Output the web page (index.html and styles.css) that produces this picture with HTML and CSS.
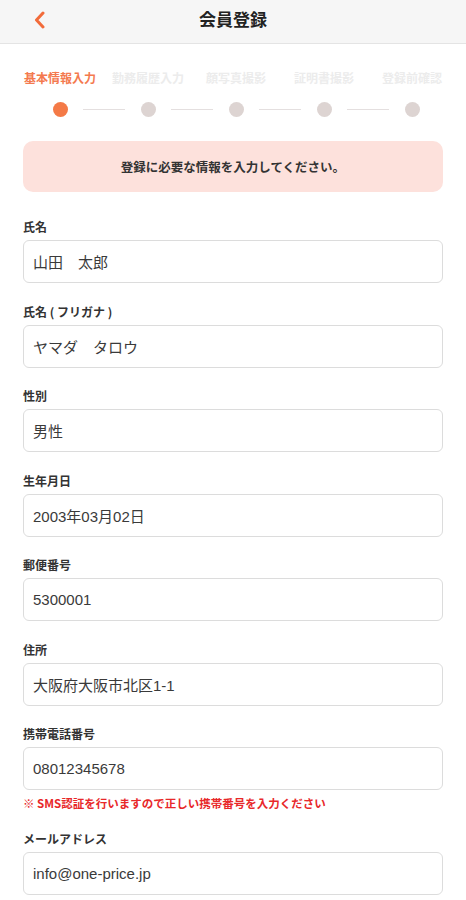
FILE: index.html
```html
<!DOCTYPE html>
<html lang="ja">
<head>
    <meta charset="UTF-8">
    <meta name="viewport" content="width=device-width, initial-scale=1.0">
    <title>会員登録</title>
    <link rel="stylesheet" href="styles.css">
</head>
<body>
    <header class="top-bar">
        <a class="back" href="#">
            <svg width="14" height="18" viewBox="0 0 14 18"><path d="M10 2 L3.5 9 L10 16" fill="none" stroke="#f26b3a" stroke-width="3" stroke-linecap="round" stroke-linejoin="round"/></svg>
        </a>
        <h1>会員登録</h1>
    </header>

    <div class="steps">
        <div class="step active"><span class="step-label">基本情報入力</span><span class="dot"></span></div>
        <div class="step"><span class="step-label">勤務履歴入力</span><span class="dot"></span></div>
        <div class="step"><span class="step-label">顔写真撮影</span><span class="dot"></span></div>
        <div class="step"><span class="step-label">証明書撮影</span><span class="dot"></span></div>
        <div class="step last"><span class="step-label">登録前確認</span><span class="dot"></span></div>
    </div>

    <div class="container">
        <div class="notice">登録に必要な情報を入力してください。</div>

        <div class="field">
            <label>氏名</label>
            <input type="text" value="山田　太郎">
        </div>
        <div class="field">
            <label>氏名 ( フリガナ )</label>
            <input type="text" value="ヤマダ　タロウ">
        </div>
        <div class="field">
            <label>性別</label>
            <input type="text" value="男性">
        </div>
        <div class="field">
            <label>生年月日</label>
            <input type="text" value="2003年03月02日">
        </div>
        <div class="field">
            <label>郵便番号</label>
            <input type="text" value="5300001">
        </div>
        <div class="field">
            <label>住所</label>
            <input type="text" value="大阪府大阪市北区1-1">
        </div>
        <div class="field">
            <label>携帯電話番号</label>
            <input type="text" value="08012345678">
            <p class="note">※ SMS認証を行いますので正しい携帯番号を入力ください</p>
        </div>
        <div class="field">
            <label>メールアドレス</label>
            <input type="text" value="info@one-price.jp">
        </div>
    </div>
</body>
</html>
```

FILE: styles.css
```css
body {
    font-family: "Noto Sans CJK JP", "Noto Sans", sans-serif;
    background-color: #fff;
    color: #333;
    margin: 0;
    padding: 0;
}
.top-bar {
    height: 43px;
    background-color: #f6f6f6;
    border-bottom: 1px solid #e4e4e4;
    display: flex;
    align-items: center;
    justify-content: center;
    position: relative;
}
.top-bar h1 {
    margin: 0;
    font-size: 17px;
    font-weight: bold;
    color: #222;
    margin-top: -6px;
}
.back {
    position: absolute;
    left: 33px;
    top: 10px;
}
.steps {
    display: grid;
    grid-template-columns: repeat(5, 88px);
    padding: 0 10px 0 16px;
    margin-top: 25px;
}
.step {
    display: flex;
    flex-direction: column;
    align-items: center;
    position: relative;
}
.step-label {
    font-size: 12px;
    font-weight: bold;
    color: #ececec;
    line-height: 17px;
    white-space: nowrap;
}
.step.active .step-label {
    color: #f47a4f;
}
.dot {
    width: 15px;
    height: 15px;
    border-radius: 50%;
    background-color: #ddd4d2;
    margin-top: 16px;
}
.step.active .dot {
    background-color: #f47a47;
}
.step::after {
    content: "";
    position: absolute;
    left: 67px;
    width: 42px;
    top: 40px;
    height: 1px;
    background-color: #e4dfdf;
}
.step.last::after {
    display: none;
}
.container {
    padding: 0 23px;
}
.notice {
    margin-top: 24px;
    height: 51px;
    background-color: #fde1dc;
    border-radius: 10px;
    display: flex;
    align-items: center;
    justify-content: center;
    font-size: 12.5px;
    font-weight: bold;
    color: #333;
    margin-bottom: 27px;
}
.field {
    margin-bottom: 20.5px;
}
.field label {
    display: block;
    font-size: 12px;
    font-weight: bold;
    color: #333;
    line-height: 15px;
    margin-bottom: 6px;
}
.field input {
    display: block;
    width: 100%;
    box-sizing: border-box;
    height: 43px;
    border: 1px solid #dcdcdc;
    border-radius: 6px;
    padding: 0 9px;
    font-family: "Liberation Sans", "Noto Sans CJK JP", sans-serif;
    font-size: 15px;
    color: #3a3a3a;
    background-color: #fff;
}
.note {
    margin: 5px 0 -1px;
    font-size: 11.5px;
    font-weight: bold;
    color: #e8282a;
    line-height: 16px;
}
```
